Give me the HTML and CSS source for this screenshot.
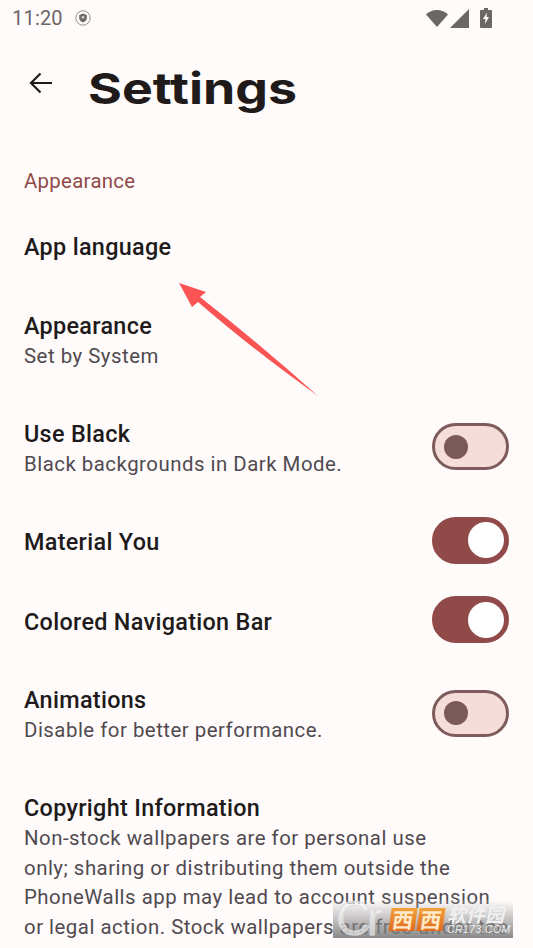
FILE: index.html
```html
<!DOCTYPE html>
<html lang="en">
<head>
<meta charset="utf-8">
<title>Settings</title>
<link rel="stylesheet" href="styles.css">
</head>
<body>
<div class="screen">
  <header class="status">
    <div class="status-left">
      <span class="clock">11:20</span>
      <svg class="shield" width="16" height="16" viewBox="0 0 16 16"><circle cx="8" cy="8" r="7.2" fill="none" stroke="#8a8686" stroke-width="0.9"/><path d="M8 3.6l3.8 1.4v3c0 2.3-1.6 3.8-3.8 4.6C5.800 11.800 4.200 10.300 4.200 8V5z" fill="#6f6b6b"/><circle cx="8" cy="7.200" r="1.300" fill="#d8d4d4"/></svg>
    </div>
    <div class="status-right">
      <svg width="22" height="19" viewBox="0 0 22 19"><path d="M0 5.500C3 2.500 6.800 1 11 1s8 1.500 11 4.500L11 18z" fill="#6b6767"/></svg>
      <svg width="19" height="19" viewBox="0 0 19 19"><path d="M19 0v19H0z" fill="#6b6767"/></svg>
      <svg class="battery" width="12" height="20" viewBox="0 0 12 20"><path d="M4 0h4v2h3a1 1 0 0 1 1 1v16a1 1 0 0 1-1 1H1a1 1 0 0 1-1-1V3a1 1 0 0 1 1-1h3z" fill="#6b6767"/><path d="M7 4.500L3 11h2.500L5 16l4-7H6.500z" fill="#fffbfa"/></svg>
    </div>
  </header>
  <div class="topbar">
    <svg class="back" width="26" height="26" viewBox="0 0 26 26"><path d="M24 13H3.500M12.500 3.500L3 13l9.500 9.500" fill="none" stroke="#201a1a" stroke-width="2.200"/></svg>
    <h1 class="title">Settings</h1>
  </div>
  <h2 class="section">Appearance</h2>
  <div class="row row-first"><div class="row-text"><div class="row-title">App language</div></div></div>
  <div class="row row-double"><div class="row-text"><div class="row-title">Appearance</div><div class="row-sub">Set by System</div></div></div>
  <div class="row row-double"><div class="row-text"><div class="row-title">Use Black</div><div class="row-sub">Black backgrounds in Dark Mode.</div></div><div class="switch"><span class="knob"></span></div></div>
  <div class="row row-single"><div class="row-text"><div class="row-title">Material You</div></div><div class="switch on"><span class="knob"></span></div></div>
  <div class="row row-single"><div class="row-text"><div class="row-title">Colored Navigation Bar</div></div><div class="switch on"><span class="knob"></span></div></div>
  <div class="row row-double"><div class="row-text"><div class="row-title">Animations</div><div class="row-sub">Disable for better performance.</div></div><div class="switch"><span class="knob"></span></div></div>
  <div class="row row-long"><div class="row-text"><div class="row-title">Copyright Information</div><div class="row-sub long">Non-stock wallpapers are for personal use<br>only; sharing or distributing them outside the<br>PhoneWalls app may lead to account suspension<br>or legal action. Stock wallpapers are free under the</div></div></div>

  <svg class="arrow" width="142" height="118" viewBox="0 0 142 118"><path d="M0 1L27 10L21 15Q82 63 139 114Q72 66 19 20L13 25z" fill="#fb5454"/></svg>

  <div class="watermark">
    <span class="wm-logo">Cr</span>
    <span class="wm-tile">西</span>
    <span class="wm-tile">西</span>
    <span class="wm-side"><span class="wm-cn">软件园</span><span class="wm-en">CR173.COM</span></span>
  </div>
</div>
</body>
</html>
```

FILE: styles.css
```css
html, body { margin: 0; padding: 0; }
body { background: #fffbfa; font-family: Roboto, "Noto Sans", sans-serif; color: #201a1a; }
.screen { position: relative; width: 533px; height: 948px; overflow: hidden; background: #fffbfa; }

.status { display: flex; justify-content: space-between; align-items: center; height: 36px; padding: 0 41px 0 12px; }
.status-left { display: flex; align-items: center; gap: 12px; }
.clock { font-size: 20px; color: #6b6767; letter-spacing: 0.2px; }
.status-right { display: flex; align-items: center; gap: 2px; }
.battery { margin-left: 9px; }

.topbar { display: flex; align-items: center; height: 104px; padding-left: 28px; }
.back { flex: none; margin-top: -10px; }
.title { margin: 0 0 0 34px; font-family: Inter, "Liberation Sans", sans-serif; font-weight: 700; font-size: 43px; line-height: 50px; color: #201a1a; transform-origin: left center; transform: scaleX(1.205); }

.section { margin: 29px 0 11px; padding: 0 24px; font-size: 20.4px; line-height: 24px; font-weight: 400; color: #904a49; letter-spacing: 0.3px; height: 26px; }

.row { display: flex; align-items: center; justify-content: space-between; padding: 0 24px; }
.row-first { height: 81.500px; }
.row-single { height: 79.500px; }
.row-double { height: 107.500px; }
.row-long { padding-top: 24px; align-items: flex-start; }
.row-title { font-size: 23.400px; line-height: 30px; font-weight: 485; letter-spacing: 0.31px; color: #201a1a; }
.row-sub { font-size: 20.400px; line-height: 30px; color: #504a50; letter-spacing: 0.5px; }
.row-sub.long { margin-top: 1px; line-height: 29.600px; white-space: nowrap; }

.switch { box-sizing: border-box; flex: none; display: flex; align-items: center; width: 77px; height: 47px; margin-bottom: 4px; border-radius: 24px; background: #f5ddda; border: 3px solid #7d5c5b; padding-left: 9px; }
.knob { width: 24px; height: 24px; border-radius: 50%; background: #7a5a59; }
.switch.on { background: #904a49; border-color: #904a49; padding-left: 33px; }
.switch.on .knob { width: 36px; height: 36px; background: #ffffff; }

.arrow { position: absolute; left: 179px; top: 282px; }

.watermark { position: absolute; left: 333px; top: 900px; width: 180px; height: 38px; display: flex; align-items: center; background: linear-gradient(to bottom, rgba(255,255,255,0.15), rgba(125,125,125,0.9)); }
.wm-logo { flex: none; font-family: "Liberation Sans", sans-serif; font-size: 48px; line-height: 38px; width: 57px; color: rgba(255,255,255,0.55); -webkit-text-stroke: 1px #dcdcdc; padding-left: 3px; box-sizing: border-box; letter-spacing: -4px; }
.wm-tile { flex: none; width: 26px; height: 23px; margin-right: 2px; font-family: "Noto Sans CJK SC", sans-serif; font-weight: 700; font-size: 21px; line-height: 23px; text-align: center; color: #ffe9c8; background: linear-gradient(to bottom, #f2a23a, #e06a20); transform: skewX(-8deg); }
.wm-side { display: flex; flex-direction: column; margin-left: 1px; }
.wm-cn { font-family: "Noto Sans CJK SC", sans-serif; font-style: italic; font-weight: 700; font-size: 19px; line-height: 20px; color: #f0f0f0; }
.wm-en { font-family: "Liberation Sans", sans-serif; font-style: italic; font-size: 10.500px; line-height: 10px; color: #eeeeee; letter-spacing: 0.4px; }
```
